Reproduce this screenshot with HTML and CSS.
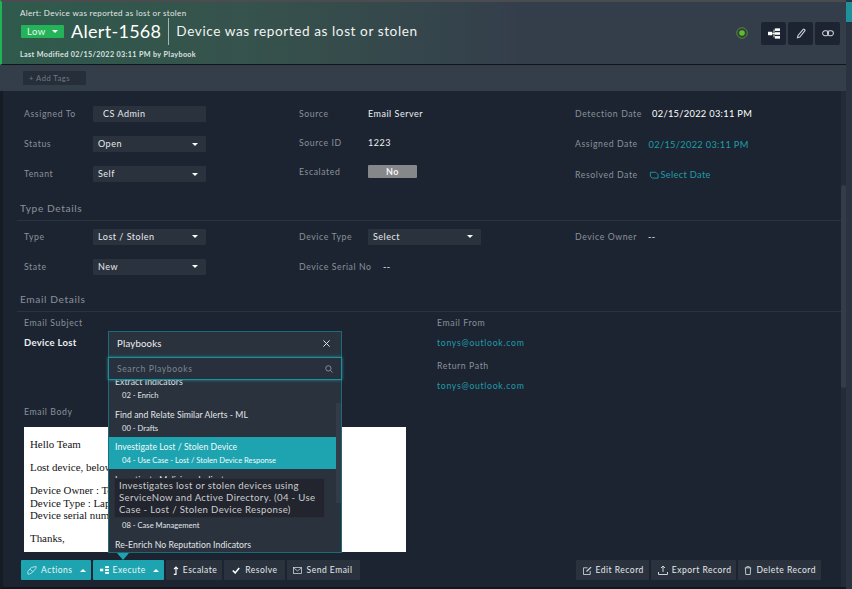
FILE: index.html
```html
<!DOCTYPE html>
<html lang="en">
<head>
<meta charset="utf-8">
<title>Alert-1568</title>
<link rel="stylesheet" href="styles.css">
</head>
<body>
<div class="page">
  <header class="hdr">
    <div class="hdr-main">
      <div class="crumb">Alert: Device was reported as lost or stolen</div>
      <div class="title-row">
        <span class="sev">Low <i class="caret"></i></span>
        <span class="alert-id">Alert-1568</span>
        <span class="alert-name">Device was reported as lost or stolen</span>
      </div>
      <div class="modified">Last Modified 02/15/2022 03:11 PM by Playbook</div>
    </div>
    <svg class="status-dot" width="14" height="14" viewBox="0 0 14 14"><circle cx="7" cy="7" r="5.3" fill="none" stroke="#4e8a2c" stroke-width="1"/><circle cx="7" cy="7" r="2.8" fill="#5fc01f"/></svg>
    <div class="hdr-tools">
      <span class="tool"><svg width="12" height="11" viewBox="0 0 14 12"><rect x="0" y="4" width="5" height="4" fill="#fff"/><rect x="8" y="0" width="6" height="3" fill="#fff"/><rect x="8" y="4.5" width="6" height="3" fill="#fff"/><rect x="8" y="9" width="6" height="3" fill="#fff"/><path d="M5 6h3M7 1.5v9" stroke="#fff" stroke-width="1" fill="none"/></svg></span>
      <span class="tool"><svg width="10" height="11" viewBox="0 0 12 14"><path d="M1.5 12.5l.7-3L8.8 1.8a1 1 0 0 1 1.4 0l.6.6a1 1 0 0 1 0 1.4L4.5 11.6z" fill="none" stroke="#cfd3d8" stroke-width="1.4"/></svg></span>
      <span class="tool"><svg width="12" height="7" viewBox="0 0 14 8"><rect x=".7" y=".9" width="7" height="5.6" rx="2.8" fill="none" stroke="#cfd3d8" stroke-width="1.2"/><rect x="6.3" y=".9" width="7" height="5.6" rx="2.8" fill="none" stroke="#cfd3d8" stroke-width="1.2"/></svg></span>
    </div>
  </header>

  <div class="tagbar"><span class="add-tags">+ Add Tags</span></div>

  <main class="body">
    <div class="grid grid-top">
      <div class="col col-a">
        <div class="field"><span class="lbl">Assigned To</span><span class="ctl ctl-plain">CS Admin</span></div>
        <div class="field"><span class="lbl">Status</span><span class="ctl">Open<i class="caret"></i></span></div>
        <div class="field"><span class="lbl">Tenant</span><span class="ctl">Self<i class="caret"></i></span></div>
      </div>
      <div class="col col-b">
        <div class="field"><span class="lbl">Source</span><span class="val">Email Server</span></div>
        <div class="field"><span class="lbl">Source ID</span><span class="val">1223</span></div>
        <div class="field"><span class="lbl">Escalated</span><span class="toggle">No</span></div>
      </div>
      <div class="col col-c">
        <div class="field"><span class="lbl lbl-det">Detection Date</span><span class="val val-date">02/15/2022 03:11 PM</span></div>
        <div class="field"><span class="lbl">Assigned Date</span><span class="link">02/15/2022 03:11 PM</span></div>
        <div class="field"><span class="lbl">Resolved Date</span><span class="link link-icon"><svg width="10" height="9" viewBox="0 0 10 10"><path d="M1 2.500h6L9.500 5v4H3L1 7z" fill="none" stroke="#1f9cab" stroke-width="1"/></svg>Select Date</span></div>
      </div>
    </div>

    <h2 class="sec sec-type">Type Details</h2>
    <div class="grid grid-type">
      <div class="col col-a">
        <div class="field"><span class="lbl">Type</span><span class="ctl">Lost / Stolen<i class="caret"></i></span></div>
        <div class="field"><span class="lbl">State</span><span class="ctl">New<i class="caret"></i></span></div>
      </div>
      <div class="col col-a">
        <div class="field"><span class="lbl">Device Type</span><span class="ctl">Select<i class="caret"></i></span></div>
        <div class="field"><span class="lbl lbl-wide">Device Serial No</span><span class="val">--</span></div>
      </div>
      <div class="col col-a">
        <div class="field"><span class="lbl lbl-owner">Device Owner</span><span class="val">--</span></div>
      </div>
    </div>

    <h2 class="sec sec-email">Email Details</h2>
    <div class="email">
      <div class="email-left">
        <div class="lbl">Email Subject</div>
        <div class="val subject">Device Lost</div>
        <div class="lbl body-lbl">Email Body</div>
        <div class="mail">
          <p>Hello Team</p>
          <p>Lost device, below are the details</p>
          <p>Device Owner : Tony Stark<br>Device Type : Laptop<br>Device serial number : 12345</p>
          <p>Thanks,</p>
        </div>
      </div>
      <div class="email-right">
        <div class="lbl">Email From</div>
        <div class="link mail-link">tonys@outlook.com</div>
        <div class="lbl path-lbl">Return Path</div>
        <div class="link mail-link">tonys@outlook.com</div>
      </div>
    </div>
  </main>

  <footer class="foot">
    <div class="btns">
      <span class="btn btn-on btn-actions"><svg width="10" height="10" viewBox="0 0 11 11"><path d="M1 7l4-4.500h1.500L10 1.500v2L6 8 3 10H1z" fill="none" stroke="#bfe6ea" stroke-width="1"/><path d="M3.500 4.500l3 3" stroke="#bfe6ea" stroke-width="1"/></svg>Actions<i class="caret-up"></i></span>
      <span class="btn btn-on"><svg width="9" height="8" viewBox="0 0 14 12"><rect x="0" y="4" width="5" height="4" fill="#fff"/><rect x="8" y="0" width="6" height="3" fill="#fff"/><rect x="8" y="4.500" width="6" height="3" fill="#fff"/><rect x="8" y="9" width="6" height="3" fill="#fff"/></svg>Execute<i class="caret-up"></i></span>
      <span class="btn btn-tight"><svg width="6" height="9" viewBox="0 0 7 10"><path d="M1 9.500h2.500V2M1.200 3.500L3.500 1l2.300 2.500" fill="none" stroke="#fff" stroke-width="1.300"/></svg>Escalate</span>
      <span class="btn btn-resolve"><svg width="8" height="7" viewBox="0 0 10 8"><path d="M1 4l3 3 5-6" fill="none" stroke="#fff" stroke-width="2"/></svg>Resolve</span>
      <span class="btn btn-mail"><svg width="9" height="7" viewBox="0 0 10 8"><rect x=".5" y=".5" width="9" height="7" fill="none" stroke="#cfd3d8" stroke-width=".9"/><path d="M.5 1l4.500 3.500L9.500 1" fill="none" stroke="#cfd3d8" stroke-width=".9"/></svg>Send Email</span>
    </div>
    <div class="btns">
      <span class="btn btn-tight"><svg width="9" height="9" viewBox="0 0 10 10"><path d="M8 5.500V9.500H.5V2H5" fill="none" stroke="#cfd3d8"/><path d="M3.500 6.500l.4-1.500L8.500.8l1 1L5 6z" fill="#cfd3d8"/></svg>Edit Record</span>
      <span class="btn btn-tight"><svg width="10" height="10" viewBox="0 0 10 10"><path d="M5 7V1.500M3 3l2-2 2 2" fill="none" stroke="#cfd3d8"/><path d="M.5 7v2.500h9V7" fill="none" stroke="#cfd3d8"/></svg>Export Record</span>
      <span class="btn btn-tight btn-del"><svg width="8" height="9" viewBox="0 0 9 10"><path d="M1 2h7M3 2V.7h3V2M1.500 2l.5 7.500h5L7.500 2" fill="none" stroke="#cfd3d8"/></svg>Delete Record</span>
    </div>
  </footer>

  <div class="sb-main"><span class="sb-thumb"></span></div>
  <div class="sb-outer"><span class="sb-outer-thumb"></span></div>

  <section class="pop">
    <div class="pop-head"><span>Playbooks</span><svg width="7" height="7" viewBox="0 0 8 8"><path d="M.5.500l7 7M7.500.500l-7 7" stroke="#e6e8ea" stroke-width="1.100"/></svg></div>
    <div class="pop-search"><span>Search Playbooks</span><svg width="8" height="8" viewBox="0 0 9 9"><circle cx="3.800" cy="3.800" r="3" fill="none" stroke="#8e96a0"/><path d="M6 6l2.500 2.500" stroke="#8e96a0"/></svg></div>
    <div class="pop-list">
      <div class="pb"><b>Extract Indicators</b><small>02 - Enrich</small></div>
      <div class="pb"><b>Find and Relate Similar Alerts - ML</b><small>00 - Drafts</small></div>
      <div class="pb pb-on"><b>Investigate Lost / Stolen Device</b><small>04 - Use Case - Lost / Stolen Device Response</small></div>
      <div class="pb"><b>Investigate Malicious Indicators</b></div>
      <div class="pb"><b></b><small>08 - Case Management</small></div>
      <div class="pb"><b>Re-Enrich No Reputation Indicators</b></div>
      <span class="pop-sb"></span>
    </div>
    <div class="tip">Investigates lost or stolen devices using ServiceNow and Active Directory. (04 - Use Case - Lost / Stolen Device Response)</div>
  </section>
  <span class="pop-arrow"></span>
</div>
</body>
</html>
```

FILE: styles.css
```css
* { box-sizing: border-box; }
html, body { margin: 0; height: 100%; overflow: hidden; background: #14191f; }
body { font-family: Lato, "Open Sans", sans-serif; color: #fff; }

.page { position: relative; width: 852px; height: 589px; overflow: hidden; background: #1c2431; display: flex; flex-direction: column; padding-right: 6px; }

.hdr { height: 65px; flex: none; display: flex; align-items: center; padding: 0 0 0 18px; border-top: 2px solid #4a4c50; border-left: 2px solid #22b257; border-bottom: 1px solid #12161b; background: linear-gradient(90deg, #2f5a4c 0, #36524c 30%, #343e4b 62%, #343e4b 100%); }
.hdr-main { flex: 1; }
.crumb { font-size: 8px; letter-spacing: .36px; color: #e3e8e8; line-height: 12px; }
.title-row { display: flex; align-items: center; height: 27px; margin-top: -1px; }
.sev { width: 43px; height: 13px; margin-left: 1px; background: #25b35a; border-radius: 1px; font-size: 9.500px; letter-spacing: .4px; padding: 0 6px; margin-right: 7px; color: #e9f7ee; display: flex; align-items: center; justify-content: space-between; }
.alert-id { font-size: 18px; letter-spacing: .3px; padding-right: 7px; border-right: 1px solid #a8b3b8; line-height: 27px; margin-right: 7px; color: #fff; }
.alert-name { font-size: 13.600px; letter-spacing: .58px; color: #f1f3f3; }
.modified { font-size: 7.200px; letter-spacing: .36px; font-weight: 700; color: #dde2e3; line-height: 10px; margin-top: 5px; }
.status-dot { flex: none; margin-right: 12px; }
.hdr-tools { display: flex; gap: 2px; margin-right: 6px; flex: none; }
.tool { width: 25px; height: 23px; background: #1c2431; border-radius: 2px; display: flex; align-items: center; justify-content: center; }

.caret { width: 0; height: 0; border: 3px solid transparent; border-top: 3.500px solid #fff; border-bottom: 0; display: block; }
.caret-up { width: 0; height: 0; border: 3px solid transparent; border-bottom: 3px solid #fff; border-top: 0; display: inline-block; margin-left: 3px; }

.tagbar { height: 26px; flex: none; background: #343e4b; padding: 6px 0 0 23px; }
.add-tags { display: block; width: 63px; height: 14px; background: #262e3a; border-radius: 1px; font-size: 7.600px; letter-spacing: .5px; color: #717a85; line-height: 14px; padding-left: 6px; }

.body { flex: 1; min-height: 0; padding: 15px 10px 0 21px; border-left: 3px solid #161c24; }

.grid { display: grid; grid-template-columns: 275px 276px 1fr; }
.col { display: flex; flex-direction: column; }
.col-a { gap: 14px; }
.col-b { gap: 13px; margin-top: -.5px; }
.col-c { gap: 14.500px; margin-top: -.5px; }
.field { display: flex; align-items: center; height: 16px; }
.lbl { font-size: 8.700px; letter-spacing: .6px; color: #8a919b; width: 69px; flex: none; line-height: 16px; white-space: nowrap; }
.lbl-wide { width: 84px; }
.lbl-owner { width: 73px; }
.col-c .lbl { width: 73.500px; }
.col-c .lbl-det { width: 77px; }
.ctl { width: 113px; height: 16px; background: #2a323e; border-radius: 1px; font-size: 9px; letter-spacing: .5px; line-height: 16px; padding: 0 8px 0 5px; display: flex; align-items: center; justify-content: space-between; color: #e8eaec; }
.ctl-plain { padding-left: 10px; }
.val { font-size: 9px; letter-spacing: .5px; color: #eef0f2; white-space: nowrap; }
.val-date { font-size: 9.300px; letter-spacing: .3px; color: #fff; }
.link { font-size: 9.300px; letter-spacing: .3px; color: #1f9cab; white-space: nowrap; }
.link-icon { display: flex; align-items: center; gap: 2px; }
.toggle { width: 49px; height: 13px; background: #85878a; font-size: 9px; font-weight: 700; letter-spacing: .5px; text-align: center; line-height: 13px; border-radius: 1px; color: #f4f4f4; }

.sec { font-size: 10.200px; font-weight: 400; letter-spacing: .6px; color: #8a919b; margin: 0 -5px 0 -7px; padding: 0 0 6px 3px; height: 19px; line-height: 13px; border-bottom: 1px solid #2a3440; }
.sec-type { margin-top: 19px; }
.sec-email { margin-top: 18px; }
.grid-type { margin-top: 8px; }

.email { display: flex; margin-top: 3px; }
.email-left { width: 413px; flex: none; }
.email .lbl { width: auto; }
.subject { font-size: 9.500px; line-height: 16px; margin-top: 4px; letter-spacing: .3px; font-weight: 700; }
.body-lbl { margin-top: 53px; }
.mail { width: 382px; height: 125px; margin-top: 7px; background: #fff; color: #111; font-family: "Liberation Serif", serif; font-size: 10.900px; line-height: 12.500px; padding: 11px 6px; overflow: hidden; white-space: nowrap; }
.mail p { margin: 0 0 10.800px; }
.mail-link { line-height: 16px; margin-top: 4px; font-size: 8.700px; letter-spacing: .7px; }
.path-lbl { margin-top: 7px; }

.foot { height: 36px; flex: none; background: #1c2431; border-left: 3px solid #161c24; border-bottom: 2px solid #12161b; display: flex; justify-content: space-between; align-items: flex-start; padding: 7px 25px 0 18px; }
.btns { display: flex; gap: 2px; }
.btn { height: 20px; background: #2a323e; border-radius: 1px; font-size: 8.500px; letter-spacing: .5px; color: #e6e8ea; display: flex; align-items: center; gap: 5px; padding: 0 5px 0 7px; white-space: nowrap; }
.btn-on { background: #1ea4b0; color: #e9f6f7; gap: 4px; }
.btn-actions { padding-left: 6px; }
.btn-resolve { padding: 0 7px 0 8px; }
.btn-mail { padding: 0 8px 0 6px; }
.btn-del { padding-left: 6px; }
.btn-tight { gap: 4px; }

.sb-main { position: absolute; left: 841px; top: 91px; width: 5px; height: 496px; background: #232b37; }
.sb-thumb { display: block; margin-top: 94px; height: 203px; background: #333c48; border-radius: 3px; }
.sb-outer { position: absolute; left: 846px; top: 0; width: 6px; height: 589px; background: #2a3340; }
.sb-outer-thumb { display: block; margin-top: 2px; height: 20px; background: #1f8f9c; }

.pop { position: absolute; left: 108px; top: 331px; width: 234px; height: 222px; background: #2a323e; border: 1px solid #1d6b78; }
.pop-head { height: 25px; display: flex; justify-content: space-between; align-items: center; padding: 0 11px 2px 8px; font-size: 9.600px; letter-spacing: .2px; color: #eef0f2; }
.pop-search { height: 23px; margin: 0 -1px; background: #27303c; border: 1px solid #1f8f9c; box-shadow: 0 0 3px #1f8f9c; display: flex; align-items: center; justify-content: space-between; padding: 0 8px; font-size: 8.600px; letter-spacing: .6px; color: #7d858f; position: relative; z-index: 1; }
.pop-list { position: relative; height: 172px; overflow: hidden; }
.pb { height: 32.500px; margin-right: 5px; padding: 4.500px 0 0 6px; color: #e2e5e8; }
.pb:first-child { margin-top: -8.500px; }
.pb b { display: block; font-weight: 400; font-size: 8.700px; line-height: 12px; min-height: 12px; white-space: nowrap; letter-spacing: .05px; }
.pb small { display: block; font-size: 7.600px; line-height: 12px; padding-left: 7px; margin-top: 1px; white-space: nowrap; }
.pb-on { background: #1ea4b0; color: #f2fbfc; }
.pop-sb { position: absolute; right: 0; top: 23px; width: 5px; height: 100px; background: #323b47; }
.tip { position: absolute; left: 5px; top: 146px; width: 211px; height: 40px; background: #22252d; border: 1px solid #2b2e36; color: #c9cdd1; font-size: 9.600px; line-height: 12px; letter-spacing: .35px; padding: 1px 4px 0; }
.pop-arrow { position: absolute; left: 117px; top: 553px; width: 0; height: 0; border-left: 6px solid transparent; border-right: 6px solid transparent; border-top: 7px solid #1ea4b0; }
```
